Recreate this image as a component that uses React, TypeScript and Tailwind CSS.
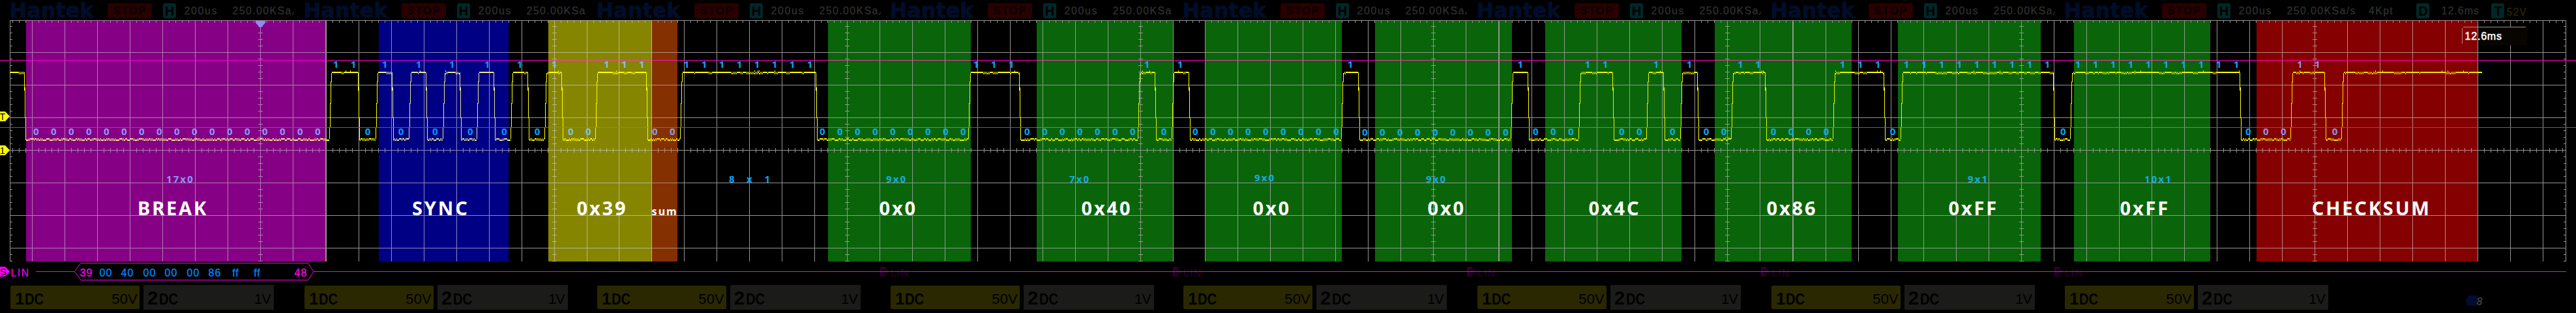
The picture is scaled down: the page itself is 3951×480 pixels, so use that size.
import React from "react";

type Tint = { fill: string; grid: string; trace: string; bit: string; rule: string };

const TINTS: Record<string, Tint> = {
  none: { fill: "#000000", grid: "#969292", trace: "#ffff00", bit: "#00a8ff", rule: "#ff00c4" },
  magenta: { fill: "#850085", grid: "#b07db0", trace: "#ffe484", bit: "#8c98fa", rule: "#ff00d0" },
  blue: { fill: "#000085", grid: "#8c88b8", trace: "#e6e490", bit: "#0098ff", rule: "#ea00cc" },
  olive: { fill: "#858500", grid: "#bab690", trace: "#fffc00", bit: "#80c4e0", rule: "#ff3cae" },
  orange: { fill: "#853000", grid: "#b88c78", trace: "#ffe400", bit: "#8c9ce4", rule: "#ff1cae" },
  green: { fill: "#0a640a", grid: "#8c9a8a", trace: "#e4f400", bit: "#10acea", rule: "#e63cae" },
  red: { fill: "#850000", grid: "#b88484", trace: "#ffdc00", bit: "#8c94e6", rule: "#ff00b4" },
};

type Band = { x: number; end: number; tint: string; label: string; labelX: number; small?: boolean };

const BANDS: Band[] = [
  { x: 40, end: 500, tint: "magenta", label: "BREAK", labelX: 211 },
  { x: 581, end: 780, tint: "blue", label: "SYNC", labelX: 632 },
  { x: 841, end: 1000, tint: "olive", label: "0x39", labelX: 884.5 },
  { x: 1000, end: 1039, tint: "orange", label: "sum", labelX: 999.6, small: true },
  { x: 1270, end: 1489, tint: "green", label: "0x0", labelX: 1348.5 },
  { x: 1590, end: 1799, tint: "green", label: "0x40", labelX: 1658.5 },
  { x: 1849, end: 2058, tint: "green", label: "0x0", labelX: 1921.5 },
  { x: 2109, end: 2319, tint: "green", label: "0x0", labelX: 2189.5 },
  { x: 2370, end: 2579, tint: "green", label: "0x4C", labelX: 2436.5 },
  { x: 2630, end: 2840, tint: "green", label: "0x86", labelX: 2709.5 },
  { x: 2911, end: 3130, tint: "green", label: "0xFF", labelX: 2988.5 },
  { x: 3181, end: 3390, tint: "green", label: "0xFF", labelX: 3251.5 },
  { x: 3461, end: 3800, tint: "red", label: "CHECKSUM", labelX: 3545.7 },
];

// [bit value, centre of the first digit, number of digits, vertical nudge]
const RUNS: [number, number, number, number?][] = [
  [0, 55.3, 17], [1, 515, 2], [0, 564, 1], [1, 590, 1], [0, 615, 1], [1, 642, 1],
  [0, 667.3, 1], [1, 693, 1], [0, 721.3, 1], [1, 747, 1], [0, 773.3, 1], [1, 797, 1],
  [0, 824, 1], [1, 850, 1], [0, 875.3, 2], [1, 930.3, 3], [0, 1004.3, 2], [1, 1053, 8],
  [0, 1261.3, 9], [1, 1497, 3], [0, 1575.3, 7], [1, 1759, 1], [0, 1785, 1], [1, 1810, 1],
  [0, 1833.3, 9], [1, 2071, 1], [0, 2093.3, 9, 1], [1, 2331.7, 1], [0, 2355.3, 3],
  [1, 2435, 2], [0, 2487.3, 2], [1, 2540, 1], [0, 2565.3, 1], [1, 2591, 1], [0, 2617, 2],
  [1, 2669.3, 2], [0, 2720, 4], [1, 2826, 3], [0, 2903, 1], [1, 2924, 9], [0, 3164.3, 1],
  [1, 3187, 10], [0, 3448.3, 3], [1, 3527.3, 2], [0, 3581, 1],
];

const COUNTS: [string, number, number, number][] = [
  ["17x0", 255, 280, 1], ["8", 1118, 280, 0], ["x", 1145, 280, 0], ["1", 1172.5, 280, 0],
  ["9x0", 1359, 280, 1], ["7x0", 1640, 280, 1], ["9x0", 1924, 278, 1], ["9x0", 2187, 280, 1],
  ["9x1", 3018, 280, 1], ["10x1", 3289, 280, 1],
];

// x at which each edge starts; the line is high at first and toggles at every edge
const EDGES = [
  37, 505, 549, 576, 601, 627, 653, 679, 705, 731, 757, 783, 809, 835, 861, 913, 991, 1043,
  1251, 1485, 1563, 1745, 1771, 1797, 1823, 2057, 2083, 2317, 2343, 2421, 2473, 2525, 2551,
  2577, 2603, 2655, 2707, 2811, 2889, 2915, 3149, 3175, 3435, 3513, 3565, 3591,
];

const SEGMENTS = [0, 451, 900, 1350, 1799, 2250, 2701, 3151];

const GRID_X = [
  49, 99, 149, 199, 249, 299, 349, 399, 449, 500, 550, 600, 650, 700, 750, 800, 850, 900, 949,
  999, 1049, 1099, 1149, 1199, 1249, 1299, 1349, 1399, 1449, 1499, 1549, 1599, 1649, 1699, 1749,
  1799, 1848, 1898, 1948, 1998, 2048, 2098, 2148, 2198, 2248, 2299, 2349, 2399, 2449, 2499, 2549,
  2599, 2649, 2699, 2750, 2800, 2850, 2900, 2950, 3000, 3050, 3100, 3150, 3200, 3250, 3300, 3350,
  3400, 3450, 3500, 3550, 3600, 3650, 3700, 3750, 3800, 3850, 3900,
];
const CENTRES = [399, 850, 1299, 1749, 2198, 2649, 3100, 3550];
const DOUBLE = [499, 2298, 2749];

const rect = (x: number, y: number, w: number, h: number) => `M${x} ${y}h${w}v${h}h${-w}z`;

function tintAt(x: number): Tint {
  const band = BANDS.find((b) => x >= b.x && x < b.end);
  return TINTS[band ? band.tint : "none"];
}

function buildGrid() {
  let d = rect(15, 31, 3921, 1) + rect(15, 31, 1, 370) + rect(3935, 31, 1, 370);
  for (let y = 80; y < 400; y += 50) d += rect(15, y, 3921, 1);
  for (const x of GRID_X) {
    d += rect(x, 31, 1, 370);
    for (let k = 10; k <= 40; k += 10) {
      if (x + k < 3935) d += rect(x + k, 32, 1, 3) + rect(x + k, 227, 1, 7);
    }
  }
  for (const x of [19, 29, 39]) d += rect(x, 32, 1, 3) + rect(x, 227, 1, 7);
  for (const x of DOUBLE) d += rect(x, 31, 1, 370);
  for (let y = 40; y <= 400; y += 10) {
    d += rect(16, y, 3, 1) + rect(3932, y, 3, 1);
    for (const c of CENTRES) d += rect(c - 3, y, 7, 1);
  }
  return d;
}

function buildTrace() {
  let seed = 7;
  const rand = () => {
    seed = (seed * 1103515245 + 12345) % 2147483648;
    return seed / 2147483648;
  };
  let d = "";
  const flat = (from: number, to: number, high: boolean) => {
    let x = from;
    let lower = !high;
    while (x < to) {
      const mode = rand();
      const len = Math.min(to - x, 1 + Math.floor(rand() * (high ? 7 : 5)));
      if (high) {
        if (mode < 0.7) d += rect(x, 110, len, 2);
        else for (let i = 0; i < len; i++) d += rect(x + i, i % 2 || mode > 0.95 ? 110 : 112, 1, 2);
        if (mode > 0.92) d += rect(x, 108, 1, 2);
      } else if (mode < 0.4) {
        for (let i = 0; i < len; i++) d += rect(x + i, i % 2 ? 212 : 214, 1, 2);
      } else {
        d += rect(x, lower ? 214 : 212, len, 2);
        lower = !lower;
      }
      x += len;
    }
  };
  let x = 15;
  EDGES.forEach((e, i) => {
    const high = i % 2 === 0;
    flat(x, e, high);
    if (high) {
      d += rect(e, 111, 1, 28) + rect(e + 1, 134, 1, 47) + rect(e + 2, 180, 1, 35);
      x = e + 3;
    } else {
      d += rect(e, 195, 1, 18) + rect(e + 1, 158, 1, 38) + rect(e + 2, 125, 1, 34) + rect(e + 3, 112, 1, 14);
      x = e + 4;
    }
  });
  flat(x, 3807, true);
  return d;
}

const GRID = buildGrid();
const TRACE = buildTrace();

function Ramp({ id, part }: { id: string; part: keyof Tint }) {
  const stops: React.ReactNode[] = [];
  let at = 0;
  const add = (from: number, to: number, color: string) => {
    stops.push(<stop key={`${from}a`} offset={from / 3951} stopColor={color} />);
    stops.push(<stop key={`${from}b`} offset={to / 3951} stopColor={color} />);
  };
  for (const b of BANDS) {
    if (b.x > at) add(at, b.x, TINTS.none[part]);
    add(b.x, b.end, TINTS[b.tint][part]);
    at = b.end;
  }
  add(at, 3951, TINTS.none[part]);
  return (
    <linearGradient id={id} gradientUnits="userSpaceOnUse" x1="0" y1="0" x2="3951" y2="0">
      {stops}
    </linearGradient>
  );
}

function Plot() {
  return (
    <svg className="block h-[370px] w-[3951px] shrink-0" viewBox="0 31 3951 370">
      <defs>
        <Ramp id="grid" part="grid" />
        <Ramp id="trace" part="trace" />
        <Ramp id="rule" part="rule" />
      </defs>
      {BANDS.map((b) => (
        <rect key={b.x} x={b.x} y={32} width={b.end - b.x} height={369} fill={TINTS[b.tint].fill} />
      ))}
      <path d={GRID} fill="url(#grid)" shapeRendering="crispEdges" />
      <path d="M3801 42H3876V69H3801Z" fill="#080400" />
      <path d="M3778 42H3800V69H3778Z" fill="#850000" />
      <path d={rect(3776, 43, 1, 24) + rect(3778, 41, 96, 1)} fill="url(#grid)" shapeRendering="crispEdges" />
      <path d="M392 32h15v3l-7.5 8l-7.5 -8z" fill="#8c8cf0" />
      <g className="font-['Noto_Sans','Open_Sans',sans-serif] text-[15px] font-bold" textAnchor="middle">
        {RUNS.flatMap(([bit, x, n, dy = 0]) =>
          Array.from({ length: n }, (_, i) => (
            <text key={`${x}-${i}`} x={x + i * 27} y={(bit ? 103.6 : 206.6) + dy} fill={tintAt(x + i * 27).bit}>
              {bit}
            </text>
          )),
        )}
      </g>
      <g className="font-['Noto_Sans','Open_Sans',sans-serif] text-[15px] font-bold">
        {COUNTS.map(([t, x, y, spread]) => (
          <text key={x} x={x} y={y} fill={tintAt(x).bit} letterSpacing={spread ? 2.1 : 0}>
            {t}
          </text>
        ))}
      </g>
      <path d={TRACE} fill="url(#trace)" shapeRendering="crispEdges" />
      <path d={rect(0, 92, 3951, 1) + rect(0, 195, 3951, 1)} fill="url(#rule)" shapeRendering="crispEdges" />
      <g className="font-['Noto_Sans','Open_Sans',sans-serif] font-bold" fill="#ffffff">
        {BANDS.map((b) => (
          <text key={b.x} x={b.labelX} y={330} fontSize={b.small ? 16 : 29} letterSpacing={b.small ? 2 : 2.85}>
            {b.label}
          </text>
        ))}
      </g>
      <text x={3780.5} y={60.7} fill="#ffffff" letterSpacing={0.8} className="font-['Liberation_Sans',sans-serif] text-[16px]" stroke="#ffffff" strokeWidth={0.5}>
        12.6ms
      </text>
      {[
        ["T", 171],
        ["1", 223],
      ].map(([t, y]) => (
        <g key={t}>
          <path d={`M0 ${y}h8l7 7.5l-7 7.5h-8z`} fill="#ffff00" />
          <text x={3.7} y={Number(y) + 12.7} textAnchor="middle" fill="#000000" className="font-['Liberation_Sans',sans-serif] text-[14px]">
            {t}
          </text>
        </g>
      ))}
    </svg>
  );
}

const WORDS: [string, number, boolean][] = [
  ["39", 132.5, true], ["00", 162.5, false], ["40", 195.5, false], ["00", 229.5, false],
  ["00", 262.5, false], ["00", 296.5, false], ["86", 329.5, false], ["ff", 361.5, false],
  ["ff", 394.5, false], ["48", 461.5, true],
];

function DecodeRow() {
  return (
    <svg className="block h-[36px] w-[3951px] shrink-0 font-['Liberation_Sans',sans-serif] text-[16px]" viewBox="0 401 3951 36">
      {SEGMENTS.slice(3).map((s) => (
        <g key={s} fill="#2c002c">
          <path d={`M${s} 409h7l6 7.5l-6 7.5h-7z`} />
          <text x={s + 2} y={421.5} fontSize={13} fill="#000000">S</text>
          <text x={s + 16} y={423.7} letterSpacing={1.2}>LIN</text>
        </g>
      ))}
      <path d="M0 409h8l7 7.5l-7 7.5h-8z" fill="#ff00ff" />
      <text x={0} y={422.3} fill="#000000" fontSize={15}>S</text>
      <text x={16.6} y={423.7} fill="#ff00ff" letterSpacing={1.3}>LIN</text>
      <path d={rect(55, 416, 59, 1) + rect(481, 416, 3455, 1)} fill="#ff00e8" />
      <path d="M114.5 416.5L124 403.5H472.5L481 416.5L472.5 429.5H124Z" fill="none" stroke="#ff00e8" />
      {WORDS.map(([t, x, id]) => (
        <text key={x} x={x} y={423.7} textAnchor="middle" letterSpacing={1} fill={id ? "#ff00f0" : "#0084ff"} stroke={id ? "#ff00f0" : "#0084ff"} strokeWidth={0.3}>
          {t}
        </text>
      ))}
    </svg>
  );
}

function Chip({ children }: { children: string }) {
  return (
    <span className="flex h-[23px] w-5 items-center justify-center rounded-[3px] bg-[#002828] text-[20px] leading-none font-bold text-black">
      {children}
    </span>
  );
}

function HeaderSegment({ last, wide }: { last: boolean; wide: boolean }) {
  return (
    <>
      <svg className="mt-[1px] ml-4 h-7 w-[132px] shrink-0 overflow-visible" viewBox="0 0 132 28">
        <text x={-1.5} y={25.5} fill="#000e2a" stroke="#000e2a" strokeWidth={0.8} textLength={129} lengthAdjust="spacingAndGlyphs" className="font-['DejaVu_Sans',sans-serif] text-[32px] font-bold">
          Hantek
        </text>
      </svg>
      <div className="mt-[5px] ml-[17px] flex h-[23px] w-[68px] shrink-0 items-center justify-center rounded-[3px] bg-[#2a0000] pl-[1px] text-[16.5px] leading-none font-bold tracking-[1.8px] text-[#060000]">
        STOP
      </div>
      <div className="mt-[5px] ml-[17px] shrink-0">
        <Chip>H</Chip>
      </div>
      <div className="mt-[7px] ml-[12.5px] w-[74px] shrink-0 text-[16px] leading-5 tracking-[1.6px] whitespace-nowrap">200us</div>
      <div className="mt-[7px] shrink-0 text-[16px] leading-5 tracking-[1.35px] whitespace-nowrap">{last ? "250.00KSa/s" : "250.00KSa"}</div>
      {!last && wide && (
        <svg className="mt-[17px] h-[6px] w-[3px] shrink-0" viewBox="0 0 3 6">
          <path d="M0.5 6L2.5 1" stroke="#363636" strokeWidth={1.2} />
        </svg>
      )}
      {last && (
        <>
          <div className="mt-[7px] ml-[19px] w-[73.5px] shrink-0 text-[16px] leading-5 tracking-[1.3px]">4Kpt</div>
          <div className="mt-[5px] shrink-0">
            <Chip>D</Chip>
          </div>
          <div className="mt-[7px] ml-[18px] w-[77px] shrink-0 text-[16px] leading-5 tracking-[1px]">12.6ms</div>
          <div className="mt-[5px] shrink-0">
            <Chip>T</Chip>
          </div>
          <div className="mt-[9px] ml-[3px] shrink-0 text-[16px] leading-5 tracking-[1px] text-[#2e2e00]">52V</div>
        </>
      )}
    </>
  );
}

function FooterSegment() {
  return (
    <>
      <div className="mt-[1px] ml-4 flex h-9 w-[198px] shrink-0 items-center justify-between rounded-[2px] bg-[#2a2800] pr-[3px] pl-[7px] leading-none text-black">
        <span className="flex items-baseline pt-[3px] font-bold">
          <span className="w-[15px] text-[26px]">1</span>
          <span className="inline-block origin-left scale-x-[0.88] text-[23px]">DC</span>
        </span>
        <span className="pt-[6px] text-[22px] tracking-[0.2px]">50V</span>
      </div>
      <div className="ml-1.5 flex h-[38px] w-[200px] shrink-0 items-center justify-between bg-[#1b1b1a] pr-[5px] pl-[6px] leading-none text-black">
        <span className="flex items-baseline pt-[2px] font-bold">
          <span className="w-[18px] text-[29px]">2</span>
          <span className="inline-block origin-left scale-x-[0.88] text-[23px]">DC</span>
        </span>
        <span className="pt-[5px] text-[22px] tracking-[-1px]">1V</span>
      </div>
    </>
  );
}

function Strip({ className, render }: { className: string; render: (last: boolean, wide: boolean) => React.ReactNode }) {
  return (
    <div className={className}>
      {SEGMENTS.map((s, i) => {
        const width = (SEGMENTS[i + 1] ?? 3951) - s;
        return (
          <div key={s} className="flex h-full shrink-0 items-start" style={{ width }}>
            {render(i === SEGMENTS.length - 1, width >= 450)}
          </div>
        );
      })}
    </div>
  );
}

export default function App() {
  return (
    <main className="flex h-[480px] w-[3951px] flex-col overflow-hidden bg-black font-['Liberation_Sans',sans-serif]">
      <Strip
        className="flex h-[31px] shrink-0 text-[#363636]"
        render={(last, wide) => <HeaderSegment last={last} wide={wide} />}
      />
      <Plot />
      <DecodeRow />
      <Strip
        className="flex h-[43px] shrink-0"
        render={(last) => (
          <>
            <FooterSegment />
            {last && (
              <svg className="mt-[15px] ml-[210px] h-[18px] w-[30px] shrink-0" viewBox="0 0 30 18">
                <path d="M7 1h13l-3 16h-12q-4 -2 -4 -7q1 -6 6 -9z" fill="#000c30" />
                <text x={17.5} y={15.5} fill="#3c3c3c" className="font-['Liberation_Sans',sans-serif] text-[16px] font-bold italic">
                  8
                </text>
              </svg>
            )}
          </>
        )}
      />
    </main>
  );
}
